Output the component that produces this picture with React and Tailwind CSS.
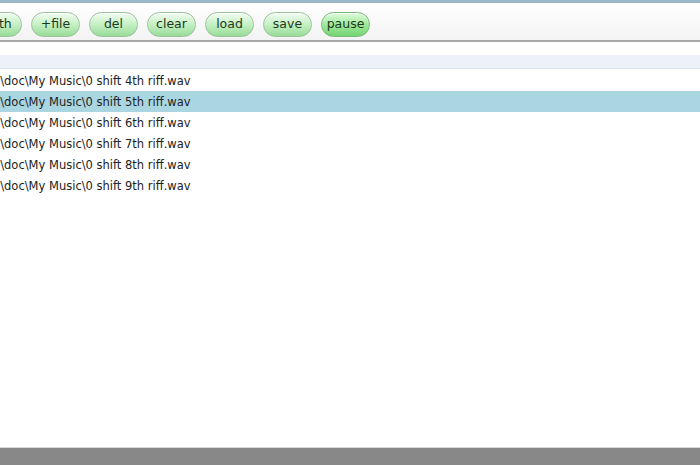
const BUTTONS = ["path", "+file", "del", "clear", "load", "save", "pause"];

const FILES = ["4th", "5th", "6th", "7th", "8th", "9th"];

function PillButton({ label, active }) {
  return (
    <button
      className={`h-[25px] w-[49px] shrink-0 rounded-full border text-[12.5px] leading-none text-[#1e3a1e] shadow-[inset_0_1px_0_rgba(255,255,255,0.8)] ${
        active
          ? "border-[#7ab87a] bg-gradient-to-b from-[#e0fade] via-[#9fea9a] to-[#74d474]"
          : "border-[#9cc09c] bg-gradient-to-b from-[#f2fcf2] via-[#c4f0c4] to-[#98dc98]"
      }`}
      style={{ fontFamily: "'DejaVu Sans', Verdana, sans-serif" }}
    >
      {label}
    </button>
  );
}

export default function App() {
  return (
    <div
      className="flex h-[465px] w-[700px] flex-col overflow-hidden bg-white"
      style={{ fontFamily: "'DejaVu Sans', Verdana, sans-serif" }}
    >
      {/* top strip */}
      <div className="h-[3px] bg-[#9bb8c6]" />

      {/* toolbar */}
      <div className="flex h-[39px] items-center border-b-2 border-[#a8a8a8] bg-gradient-to-b from-white to-[#f3f3f3] pt-[5px]">
        <div className="-ml-[27px] flex gap-[9px]">
          {BUTTONS.map((b) => (
            <PillButton key={b} label={b} active={b === "pause"} />
          ))}
        </div>
      </div>

      <div className="h-[13px] bg-white" />
      <div className="h-[14px] border-b border-[#dde3ea] bg-[#edf2f9]" />

      {/* file list */}
      <div className="flex flex-1 flex-col pt-[1px]">
        {FILES.map((f) => (
          <div
            key={f}
            className={`flex h-[21px] items-center whitespace-nowrap pt-[2px] text-[11.5px] text-[#222] ${
              f === "5th" ? "bg-[#aad6e2]" : ""
            }`}
          >
            <span className="-ml-[3px]">{`i\\doc\\My Music\\0 shift ${f} riff.wav`}</span>
          </div>
        ))}
      </div>

      {/* status bar */}
      <div className="h-[1px] bg-[#d8d8d8]" />
      <div className="h-[17px] bg-[#888888]" />
    </div>
  );
}
